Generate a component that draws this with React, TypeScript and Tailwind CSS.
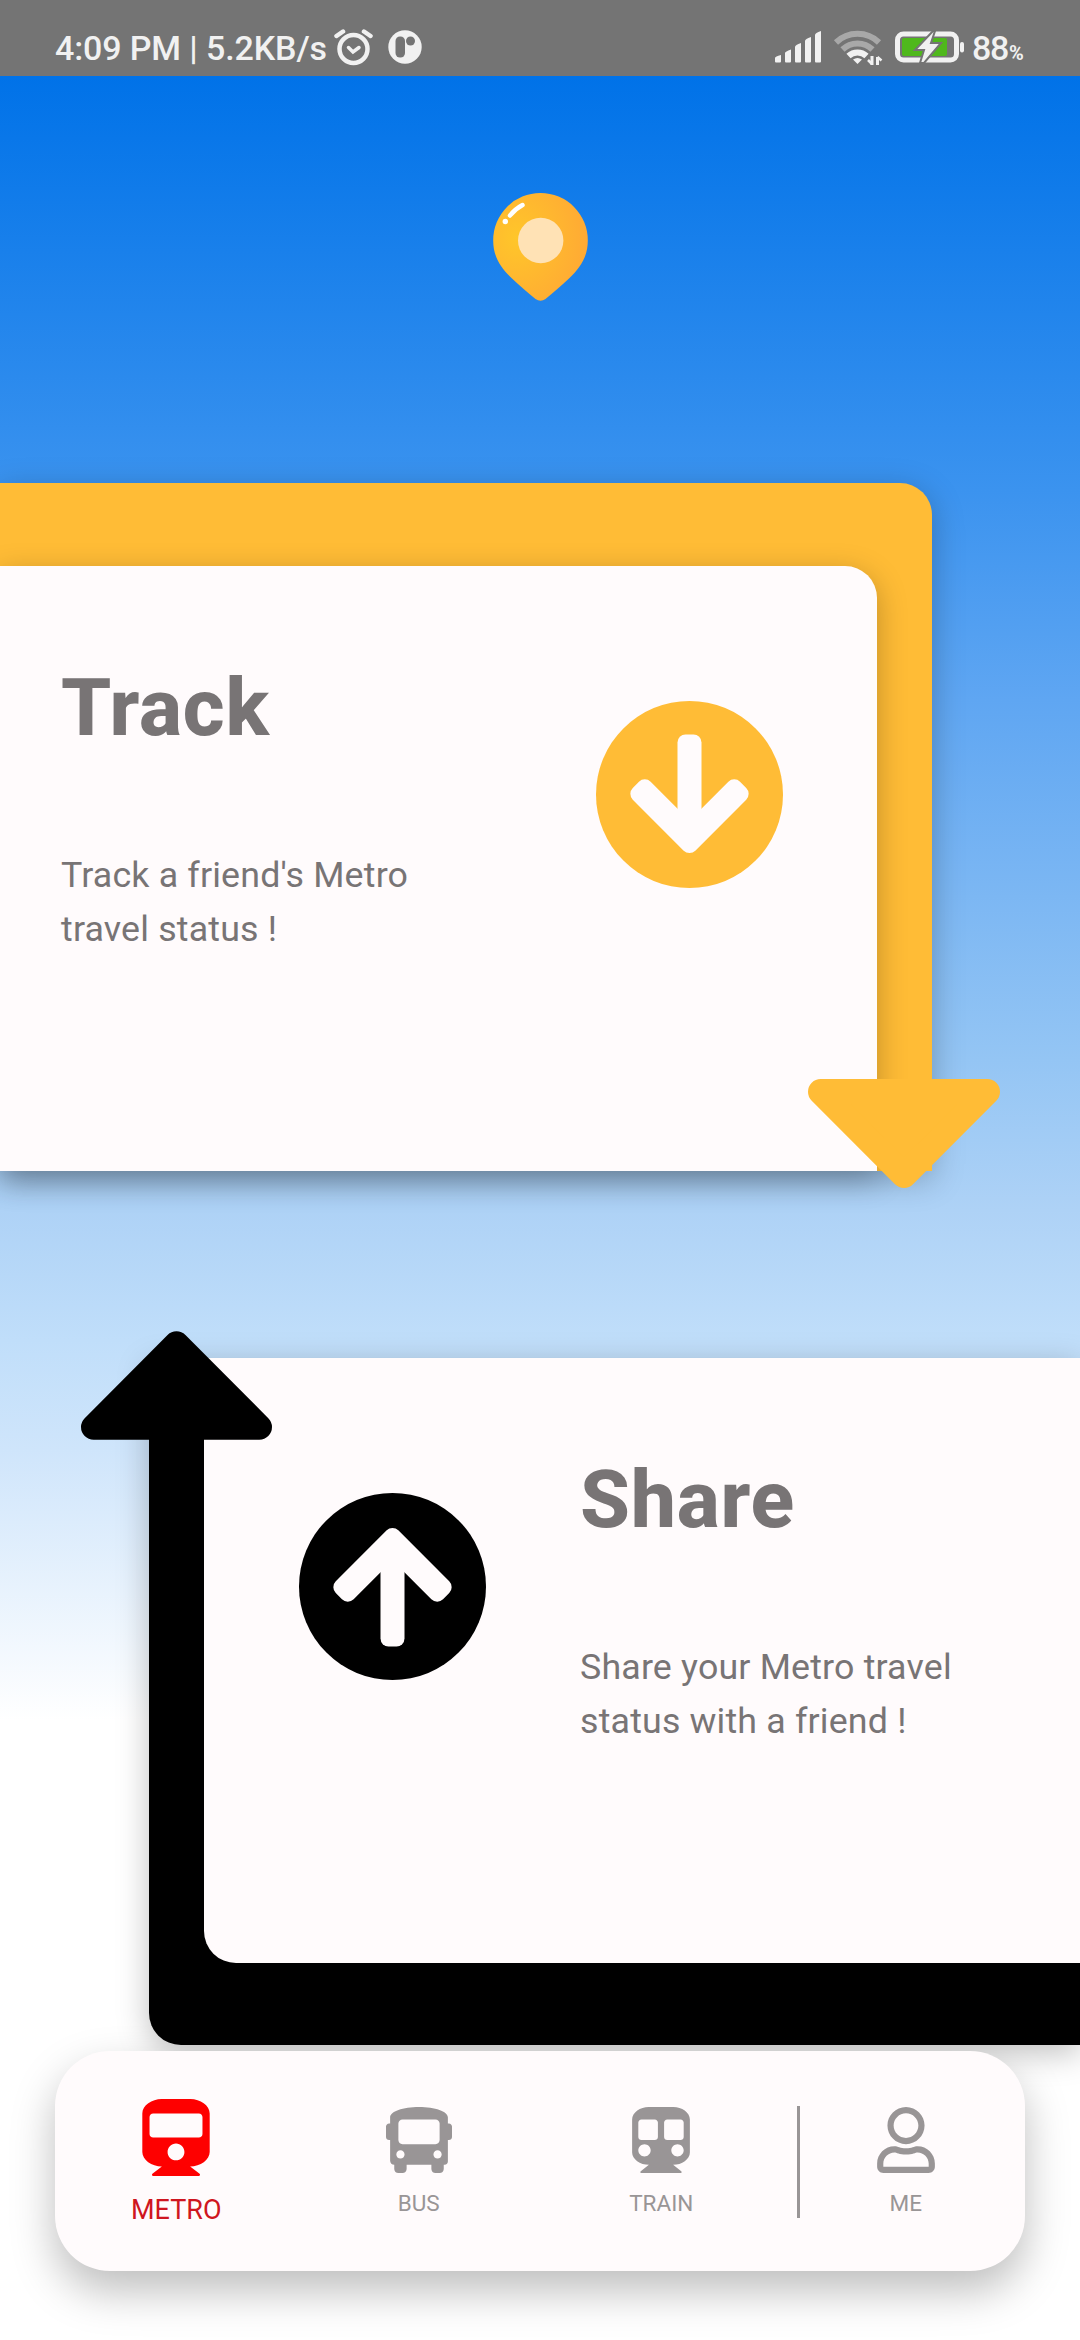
import type { ReactNode } from "react";
import { FaBus, FaRegUser, FaSubway, FaTrain } from "react-icons/fa";

function StatusBar() {
  return (
    <header className="flex h-[76px] w-full shrink-0 justify-between bg-[#747474] pl-[55px] pr-[55px] pt-[27px] text-[#f1f1f1]">
      <div className="flex h-[42px] items-center">
        <span className="w-[278px] whitespace-nowrap text-[34px] font-medium leading-[42px] tracking-[-0.12px]">
          4:09 PM | 5.2KB/s
        </span>
        <svg className="-mt-[2px] h-[38px] w-[40px]" viewBox="0 0 40 38" fill="none" stroke="currentColor" strokeLinecap="round">
          <circle cx="20.5" cy="21" r="14" strokeWidth="4.5" />
          <path d="M3.5 8 10 3.5M37.5 8 31 3.5" strokeWidth="4.5" />
          <path d="M15.5 19.5 20 24l6-4.500" strokeWidth="3.500" />
        </svg>
        <svg className="-mt-[2px] ml-[15px] h-[34px] w-[34px]" viewBox="0 0 34 34">
          <circle cx="17" cy="17" r="16.700" fill="currentColor" />
          <rect x="7.500" y="6.500" width="9.500" height="21" rx="4.500" fill="#747474" />
          <circle cx="22.500" cy="11" r="4.500" fill="#747474" />
        </svg>
      </div>
      <div className="flex h-[42px] items-center">
        <svg className="-mt-[2px] h-[34px] w-[48px]" viewBox="0 0 48 34" fill="currentColor">
          <path d="M1 28q0-1.500 6-3v6.500q0 1-1 1H2q-1 0-1-1zM11 23q0-1.500 6-3.500v12q0 1-1 1h-4q-1 0-1-1zM21 17q0-2 6-4v18.500q0 1-1 1h-4q-1 0-1-1zM31 11q0-2 6-4v24.500q0 1-1 1h-4q-1 0-1-1zM41 5q0-2 6-4v30.500q0 1-1 1h-4q-1 0-1-1z" />
        </svg>
        <svg className="-mt-[2px] ml-[11px] h-[36px] w-[50px]" viewBox="0 0 50 36" fill="none" stroke="currentColor">
          <path d="M3 13.500a31 31 0 0 1 43 0" strokeWidth="6" opacity=".42" />
          <path d="M9.500 20.500a21.500 21.500 0 0 1 30 0" strokeWidth="6" opacity=".42" />
          <path d="M15.500 27a13 13 0 0 1 18 0" strokeWidth="6" />
          <path d="M20 30.500q4.500-3 9 0L24.500 35z" fill="currentColor" stroke="none" />
          <path d="M39 27v9M44.500 37v-9" strokeWidth="3" />
          <path d="m35 31 4 4M44.500 28l4 3.500" strokeWidth="2.500" />
        </svg>
        <svg className="-mt-[2px] ml-[12px] h-[32px] w-[69px]" viewBox="0 0 69 32">
          <rect x="2.500" y="3" width="59" height="26" rx="6" fill="none" stroke="#f1f1f1" strokeWidth="5" />
          <rect x="7" y="7" width="45" height="18" rx="2" fill="#4fb81c" />
          <path d="M38 0 20 19h9l-4 13h4l17-20H36l4-12z" fill="#f1f1f1" stroke="#747474" strokeWidth="2" />
          <rect x="65" y="11" width="4" height="10.500" rx="2" fill="#f1f1f1" />
        </svg>
        <span className="ml-[8px] w-[37px] text-[34px] font-medium leading-[42px] tracking-[-1.2px]">88</span>
        <span className="w-[16px] pt-[9px] text-[20px] font-bold leading-[30px] tracking-[-1px]">%</span>
      </div>
    </header>
  );
}

function PinLogo() {
  return (
    <svg className="mt-[117px] h-[110px] w-[96px] shrink-0 self-center" viewBox="0 0 96 110">
      <defs>
        <radialGradient id="pin" cx="25%" cy="42%" r="80%">
          <stop offset="0" stopColor="#ffc62a" />
          <stop offset="1" stopColor="#ffa835" />
        </radialGradient>
      </defs>
      <path
        d="M48.500 0A47.300 47.300 0 0 0 1.200 47.500C1.200 64 9 75 20 85.500c8 7.500 16 14.500 23.500 20.500q5 3.500 10 0C61 100 69 93 77 85.500 88 75 95.800 64 95.800 47.500A47.300 47.300 0 0 0 48.500 0z"
        fill="url(#pin)"
      />
      <circle cx="48.700" cy="47.500" r="22.700" fill="#ffe2b5" />
      <path d="M18 22.500Q23 16 30.500 12" fill="none" stroke="#fff" strokeWidth="4.500" strokeLinecap="round" />
      <circle cx="13.300" cy="28.500" r="2.700" fill="#fff" />
    </svg>
  );
}

function CircleArrow({ className }: { className: string }) {
  return (
    <svg className={className} viewBox="0 0 187 187">
      <circle cx="93.500" cy="93.500" r="93.500" fill="currentColor" />
      <rect x="81.500" y="33.500" width="24" height="100" rx="8" fill="#fffbfc" />
      <path
        d="M93.500 143.800 42.600 92.800 48.800 86.600 93.500 131.300 138.200 86.600 144.400 92.800z"
        fill="#fffbfc"
        stroke="#fffbfc"
        strokeWidth="16.500"
        strokeLinejoin="round"
      />
    </svg>
  );
}

function ArrowHead({ className }: { className: string }) {
  return (
    <svg className={className} viewBox="0 0 192 109">
      <path
        d="M12.700 12.700H179.300L96 96.300z"
        fill="currentColor"
        stroke="currentColor"
        strokeWidth="25.400"
        strokeLinejoin="round"
      />
    </svg>
  );
}

function CardText({ title, lines }: { title: string; lines: string[] }) {
  return (
    <div className="flex flex-col whitespace-nowrap pt-[102px] text-[#787475]">
      <h2 className="text-[80.5px] font-extrabold leading-[80px] tracking-[0.8px]">{title}</h2>
      <p className="mt-[100px] text-[35.75px] leading-[54px] tracking-[0.18px]">
        {lines[0]}
        <br />
        {lines[1]}
      </p>
    </div>
  );
}

function NavItem({ icon, label }: { icon: ReactNode; label: string }) {
  return (
    <div className="flex w-full flex-col items-center pt-[56px] text-[#999596]">
      {icon}
      <span className="mt-[15px] text-[22.5px] leading-[30px]">{label}</span>
    </div>
  );
}

export default function App() {
  return (
    <div className="flex h-[2340px] w-[1080px] flex-col overflow-hidden bg-[linear-gradient(180deg,#0072e8_76px,#3b93ef_490px,#5fa6f2_700px,#94c5f4_1060px,#aed2f6_1210px,#c0defa_1340px,#cfe5fb_1450px,#ffffff_1720px)] font-[Roboto,sans-serif]">
      <StatusBar />
      <PinLogo />

      <section className="relative mt-[180px] h-[688px] w-[932px] shrink-0 rounded-tr-[32px] bg-[#ffbc36] pr-[55px] pt-[83px] shadow-[0_8px_32px_rgba(0,0,0,0.25)]">
        <div className="flex h-full w-full justify-between rounded-tr-[32px] bg-[#fffbfc] pl-[61px] pr-[94px] shadow-[0_8px_30px_rgba(0,0,0,0.25)]">
          <CardText title="Track" lines={["Track a friend's Metro", "travel status !"]} />
          <CircleArrow className="mt-[135px] h-[187px] w-[187px] text-[#ffbc36]" />
        </div>
        <ArrowHead className="absolute -bottom-[17px] -right-[68px] h-[109px] w-[192px] text-[#ffbc36]" />
      </section>

      <section className="relative mt-[187px] h-[687px] w-[931px] shrink-0 self-end rounded-bl-[32px] bg-black pb-[82px] pl-[55px] shadow-[0_8px_32px_rgba(0,0,0,0.25)]">
        <div className="flex h-full w-full rounded-bl-[32px] bg-[#fffbfc] pl-[95px]">
          <CircleArrow className="mt-[135px] h-[187px] w-[187px] rotate-180 text-black" />
          <div className="ml-[94px]">
            <CardText title="Share" lines={["Share your Metro travel", "status with a friend !"]} />
          </div>
        </div>
        <ArrowHead className="absolute -left-[68px] -top-[27px] h-[109px] w-[191px] rotate-180 text-black" />
      </section>

      <nav className="relative mx-[55px] mt-[6px] grid h-[220px] shrink-0 grid-cols-4 rounded-[55px] bg-[#fffbfc] shadow-[0_20px_44px_rgba(0,0,0,0.26)]">
        <div className="flex flex-col items-center pt-[48px]">
          <FaTrain className="h-[77px] w-[68px] text-[#fe0000]" />
          <span className="mt-[18px] text-[27px] leading-[32px] text-[#cf1620]">METRO</span>
        </div>
        <NavItem icon={<FaBus className="h-[66px] w-[66px]" />} label="BUS" />
        <NavItem icon={<FaSubway className="h-[66px] w-[58px]" />} label="TRAIN" />
        <div className="flex pl-[14px] pr-[13px]">
          <div className="mt-[55px] h-[112px] w-[3px] shrink-0 bg-[#999596]" />
          <NavItem icon={<FaRegUser className="h-[66px] w-[58px]" />} label="ME" />
        </div>
      </nav>
    </div>
  );
}
